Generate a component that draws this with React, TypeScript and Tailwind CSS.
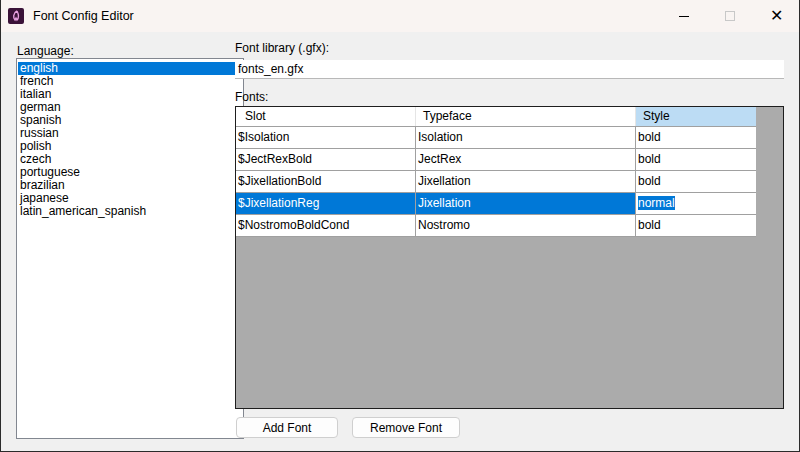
const languages = ["english", "french", "italian", "german", "spanish", "russian", "polish", "czech", "portuguese", "brazilian", "japanese", "latin_american_spanish"];

const fonts = [
  { slot: "$Isolation", face: "Isolation", style: "bold" },
  { slot: "$JectRexBold", face: "JectRex", style: "bold" },
  { slot: "$JixellationBold", face: "Jixellation", style: "bold" },
  { slot: "$JixellationReg", face: "Jixellation", style: "normal", selected: true },
  { slot: "$NostromoBoldCond", face: "Nostromo", style: "bold" },
];

export default function App() {
  return (
    <div className="w-[800px] h-[452px] flex flex-col bg-[#f0f0f0] text-[12px] text-black border-l border-b border-r border-[#2b2b2b] overflow-hidden" style={{ fontFamily: '"Liberation Sans", Arial, sans-serif' }}>
      {/* title bar */}
      <div className="h-[32px] flex items-center bg-[#f9f4f2] shrink-0">
        <div className="ml-[7px] w-[16px] h-[16px] rounded-[2px] bg-[#3a1238] flex items-center justify-center">
          <svg width="10" height="12" viewBox="0 0 10 12"><path d="M6 1 C2 3 2 8 4 10 L5 8 L6 10 C8 8 8 5 6 1" fill="none" stroke="#e8a0e0" strokeWidth="1.4" /></svg>
        </div>
        <span className="ml-[9px] text-[12.5px]">Font Config Editor</span>
        <div className="ml-auto flex items-center h-full">
          <div className="w-[46px] flex justify-center"><div className="w-[10px] h-px bg-black" /></div>
          <div className="w-[46px] flex justify-center"><div className="w-[10px] h-[10px] border border-[#c8c8c8]" /></div>
          <div className="w-[46px] flex justify-center text-[16px] font-light">✕</div>
        </div>
      </div>
      <div className="flex-1 flex pl-[15px] pr-[15px] pt-[10px]">
        <div className="w-[228px] flex flex-col">
          <div className="h-[16px] pl-[1px]">Language:</div>
          <div className="w-[228px] h-[381px] bg-white border border-[#828790] pt-[3px] px-[1px]">
            {languages.map((l, i) => (
              <div key={l} className={`h-[13px] leading-[13px] pl-[2px] ${i === 0 ? "bg-[#0078d7] text-white" : ""}`}>{l}</div>
            ))}
          </div>
        </div>
        <div className="flex-1 ml-[-9px] flex flex-col">
          <div className="h-[18px] leading-[12px]">Font library (.gfx):</div>
          <div className="h-[19px] bg-white border-b border-[#b8b8b8] pl-[3px] leading-[18px]">fonts_en.gfx</div>
          <div className="h-[14px] mt-[13px] leading-[10px]">Fonts:</div>
          <div className="h-[303px] bg-[#ababab] border border-[#1e1e1e]">
            <div className="flex h-[20px] bg-white w-[520px] border-b border-[#a0a0a0]">
              <div className="w-[180px] border-r border-[#e5e5e5] pl-[9px] leading-[19px]">Slot</div>
              <div className="w-[220px] border-r border-[#e5e5e5] pl-[7px] leading-[19px]">Typeface</div>
              <div className="w-[120px] bg-[#bcdcf4] pl-[7px] leading-[19px]">Style</div>
            </div>
            {fonts.map((f) => (
              <div key={f.slot} className="flex h-[22px] w-[520px] bg-white border-b border-[#a0a0a0]">
                <div className={`w-[180px] border-r border-[#a0a0a0] pl-[2px] leading-[21px] ${f.selected ? "bg-[#0078d7] text-white" : ""}`}>{f.slot}</div>
                <div className={`w-[220px] border-r border-[#a0a0a0] pl-[2px] leading-[21px] ${f.selected ? "bg-[#0078d7] text-white" : ""}`}>{f.face}</div>
                <div className="w-[120px] pl-[2px] leading-[21px]">
                  {f.selected ? <span className="bg-[#0078d7] text-white">{f.style}</span> : f.style}
                </div>
              </div>
            ))}
          </div>
          <div className="flex gap-[14px] mt-[8px] ml-[1px]">
            <button className="w-[102px] h-[21px] bg-[#fdfdfd] border border-[#cfcfcf] rounded-[4px]">Add Font</button>
            <button className="w-[108px] h-[21px] bg-[#fdfdfd] border border-[#cfcfcf] rounded-[4px]">Remove Font</button>
          </div>
        </div>
      </div>
    </div>
  );
}
